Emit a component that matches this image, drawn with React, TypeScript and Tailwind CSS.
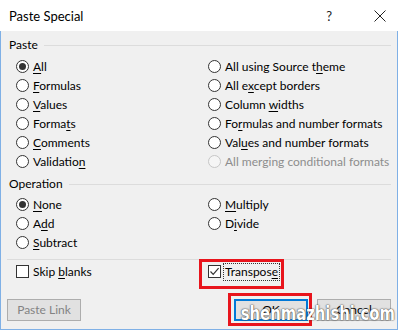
import React from "react";

const font = "font-['Lato','Segoe_UI',sans-serif]";

function Radio({ checked = false, disabled = false }: { checked?: boolean; disabled?: boolean }) {
  return (
    <span
      className={`relative inline-flex w-[13px] h-[13px] rounded-full border shrink-0 items-center justify-center ${
        disabled ? "border-[#c6c6c6] bg-[#f5f5f5]" : "border-[#333333] bg-white"
      }`}
    >
      {checked && <span className="w-[7px] h-[7px] rounded-full bg-[#333333]" />}
    </span>
  );
}

function Check({ checked = false }: { checked?: boolean }) {
  return (
    <span className="inline-flex w-[13px] h-[13px] border border-[#333333] bg-white shrink-0 items-center justify-center">
      {checked && (
        <svg width="11" height="11" viewBox="0 0 11 11">
          <path d="M1.5 5.5 L4.2 8.3 L9.6 2.2" fill="none" stroke="#333" strokeWidth="1.2" />
        </svg>
      )}
    </span>
  );
}

function Item({
  children,
  checked,
  disabled,
}: {
  children: React.ReactNode;
  checked?: boolean;
  disabled?: boolean;
}) {
  return (
    <div className="h-[19px] flex items-center gap-[4px] whitespace-nowrap">
      <Radio checked={checked} disabled={disabled} />
      <span className={disabled ? "text-[#8d8d8d]" : "text-black"}>{children}</span>
    </div>
  );
}

const U = ({ children }: { children: React.ReactNode }) => (
  <span className="underline underline-offset-[2px]">{children}</span>
);

function GroupLabel({ label }: { label: string }) {
  return (
    <div className="h-[16px] flex items-center pl-[8px] pr-[6px] gap-[6px]">
      <span>{label}</span>
      <span className="flex-1 h-px bg-[#dcdcdc]" />
    </div>
  );
}

export default function App() {
  return (
    <div className={`w-[398px] h-[330px] bg-white relative overflow-hidden text-[12px] leading-[16px] text-black ${font}`}>
      <div className="h-[31px] flex items-center pl-[9px] pr-[12px]">
        <span className="text-[13px]">Paste Special</span>
        <span className="ml-auto mr-[42px] text-[13px] text-[#222]">?</span>
        <svg width="12" height="12" viewBox="0 0 12 12">
          <path d="M0.5 0.5 L11.5 11.5 M11.5 0.5 L0.5 11.5" stroke="#222" strokeWidth="1" />
        </svg>
      </div>
      <div className="h-[299px] bg-[#f0f0f0] border-l border-r border-b border-[#7fb0e6] pt-[6px] flex flex-col">
        <GroupLabel label="Paste" />
        <div className="mt-[4px] grid grid-cols-[192px_1fr] pl-[15px]">
          <div className="flex flex-col">
            <Item checked>
              <U>A</U>ll
            </Item>
            <Item>
              <U>F</U>ormulas
            </Item>
            <Item>
              <U>V</U>alues
            </Item>
            <Item>
              Forma<U>t</U>s
            </Item>
            <Item>
              <U>C</U>omments
            </Item>
            <Item>
              Validatio<U>n</U>
            </Item>
          </div>
          <div className="flex flex-col">
            <Item>
              All using Source t<U>h</U>eme
            </Item>
            <Item>
              All e<U>x</U>cept borders
            </Item>
            <Item>
              Column <U>w</U>idths
            </Item>
            <Item>
              Fo<U>r</U>mulas and number formats
            </Item>
            <Item>
              Val<U>u</U>es and number formats
            </Item>
            <Item disabled>All merging conditional formats</Item>
          </div>
        </div>
        <div className="mt-[5px]">
          <GroupLabel label="Operation" />
        </div>
        <div className="mt-[3px] grid grid-cols-[192px_1fr] pl-[15px]">
          <div className="flex flex-col">
            <Item checked>
              <U>N</U>one
            </Item>
            <Item>
              A<U>d</U>d
            </Item>
            <Item>
              <U>S</U>ubtract
            </Item>
          </div>
          <div className="flex flex-col">
            <Item>
              <U>M</U>ultiply
            </Item>
            <Item>
              D<U>i</U>vide
            </Item>
          </div>
        </div>
        <div className="mt-[7px] mx-[6px] h-px bg-[#dcdcdc]" />
        <div className="mt-[2px] grid grid-cols-[192px_1fr] pl-[15px]">
          <div className="h-[19px] flex items-center gap-[4px] whitespace-nowrap">
            <Check />
            <span>
              Skip <U>b</U>lanks
            </span>
          </div>
          <div className="h-[19px] flex items-center gap-[2px] whitespace-nowrap">
            <Check checked />
            <span className="border border-dotted border-[#333] px-[1px] leading-[16px]">
              Transpos<U>e</U>
            </span>
          </div>
        </div>
        <div className="mt-[18px] flex items-center pl-[6px] pr-[6px]">
          <div className="w-[74px] h-[22px] border border-[#adadad] bg-[#e1e1e1] flex items-center justify-center text-[#838383]">
            Paste Link
          </div>
          <div className="ml-auto w-[74px] h-[22px] border-2 border-[#0078d7] bg-[#e1e1e1] flex items-center justify-center">
            OK
          </div>
          <div className="ml-[9px] w-[74px] h-[22px] border border-[#adadad] bg-[#e1e1e1] flex items-center justify-center">
            Cancel
          </div>
        </div>
      </div>
      <div className="absolute left-[199px] top-[259px] w-[85px] h-[30px] border-[3px] border-[#e8141c]" />
      <div className="absolute left-[228px] top-[293px] w-[84px] h-[33px] border-[3px] border-[#e8141c]" />
      <div className="absolute left-[238px] top-[300px] w-[160px] h-[26px] flex items-center justify-center pointer-events-none">
        <span className="font-['DejaVu_Sans',sans-serif] font-bold text-[19px] text-white scale-x-[0.78] whitespace-nowrap [text-shadow:0_0_2px_#444,0_0_1px_#222]">
          shenmazhishi.com
        </span>
      </div>
    </div>
  );
}
